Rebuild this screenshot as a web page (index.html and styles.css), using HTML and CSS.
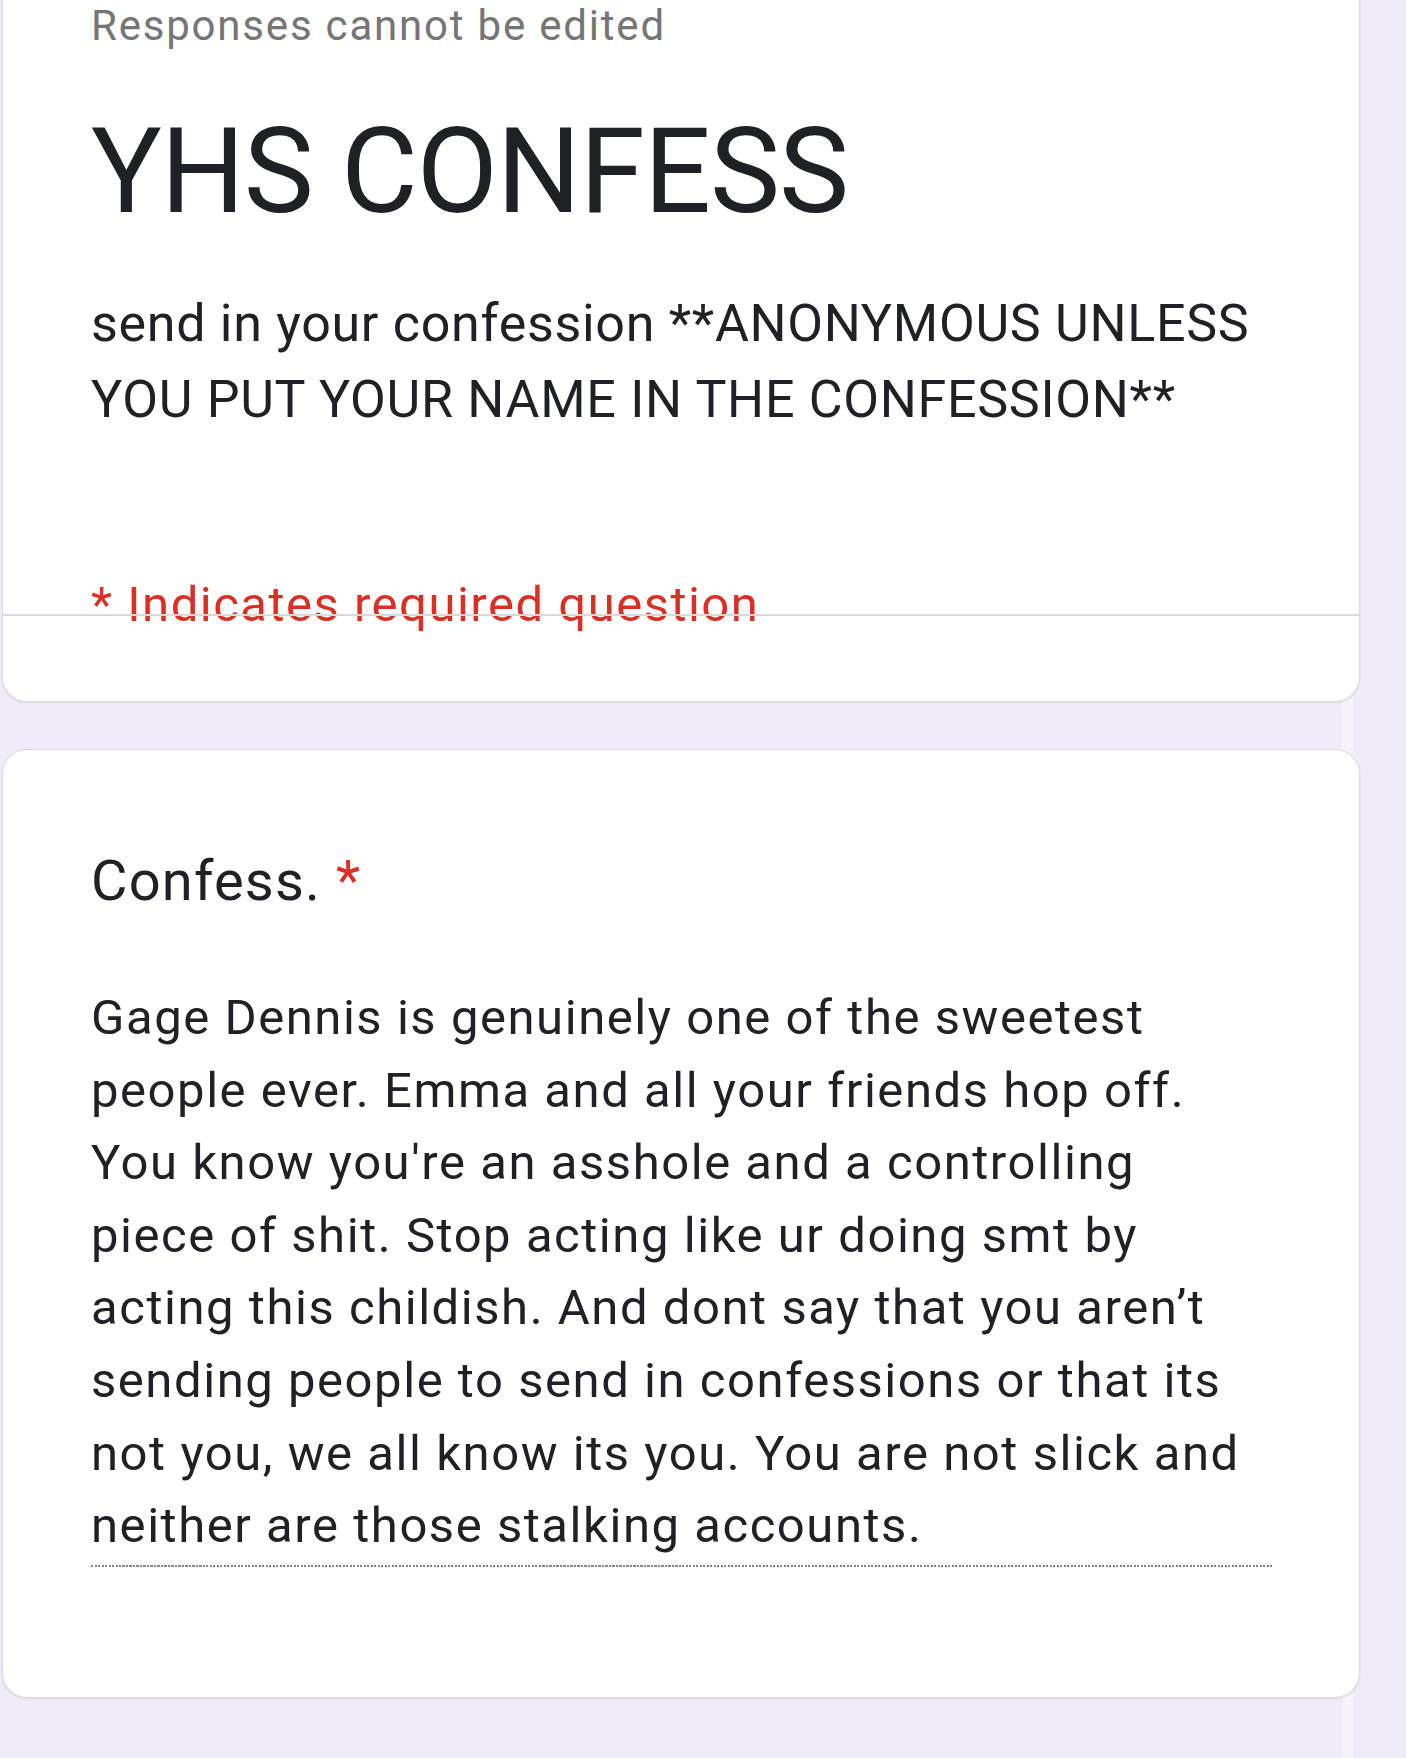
FILE: index.html
```html
<!DOCTYPE html>
<html lang="en">
<head>
<meta charset="utf-8">
<title>YHS CONFESS</title>
<link rel="stylesheet" href="styles.css">
</head>
<body>
<main class="page">
  <section class="card card-header">
    <div class="note">Responses cannot be edited</div>
    <h1 class="title">YHS CONFESS</h1>
    <p class="desc">send in your confession **ANONYMOUS UNLESS YOU PUT YOUR NAME IN THE CONFESSION**</p>
    <div class="required">* Indicates required question</div>
  </section>
  <section class="card card-question">
    <h2 class="question">Confess. <span class="star">*</span></h2>
    <p class="answer">Gage Dennis is genuinely one of the sweetest people ever. Emma and all your friends hop off. You know you're an asshole and a controlling piece of shit. Stop acting like ur doing smt by acting this childish. And dont say that you aren’t sending people to send in confessions or that its not you, we all know its you. You are not slick and neither are those stalking accounts.</p>
    <div class="dotted"></div>
  </section>
</main>
</body>
</html>
```

FILE: styles.css
```css
html, body {
  margin: 0;
  padding: 0;
}
body {
  width: 1406px;
  min-height: 1758px;
  overflow: hidden;
  font-family: Roboto, "Liberation Sans", Arial, sans-serif;
  color: #202124;
  background: linear-gradient(to right, #f0ebf8 0, #f0ebf8 1342px, #f5f2fb 1342px, #f5f2fb 1353px, #f0ebf8 1353px);
}
.page {
  display: flex;
  flex-direction: column;
  padding-left: 2px;
  width: 1358px;
}
.card {
  background: #fff;
  border: 1px solid #dadce0;
  box-shadow: 0 1px 2px rgba(60, 64, 67, 0.12);
  box-sizing: border-box;
  width: 1358px;
  padding-left: 88px;
  padding-right: 88px;
}
.card-header {
  position: relative;
  border-top: none;
  border-radius: 0 0 25px 25px;
  padding-bottom: 66px;
}
.card-header::after {
  content: "";
  position: absolute;
  left: 0;
  right: 0;
  top: 614px;
  height: 2px;
  background: #d9d9dc;
}
.note {
  font-size: 42px;
  line-height: 51px;
  letter-spacing: 1.8px;
  color: #757575;
}
.title {
  margin: 51px 0 0;
  font-size: 118px;
  line-height: 140px;
  font-weight: 400;
  letter-spacing: -1.1px;
  color: #202124;
}
.desc {
  margin: 44px 0 0;
  font-size: 52px;
  line-height: 76px;
  letter-spacing: 0.7px;
  color: #202124;
}
.required {
  margin-top: 137px;
  font-size: 49px;
  line-height: 60px;
  letter-spacing: 1.5px;
  color: #d93025;
}
.card-question {
  margin-top: 47px;
  border-radius: 25px;
  padding-top: 98px;
  padding-bottom: 130px;
}
.question {
  margin: 0;
  font-size: 56px;
  line-height: 66px;
  font-weight: 400;
  letter-spacing: 1.2px;
  color: #202124;
}
.star {
  color: #d93025;
}
.answer {
  margin: 68px 0 0;
  width: 1160px;
  font-size: 49px;
  line-height: 72.6px;
  letter-spacing: 1.55px;
  color: #202124;
  padding-bottom: 2px;
}
.dotted {
  height: 2px;
  width: 1181px;
  background: repeating-linear-gradient(to right, #80868b 0, #80868b 2px, transparent 2px, transparent 3.5px);
}
```
